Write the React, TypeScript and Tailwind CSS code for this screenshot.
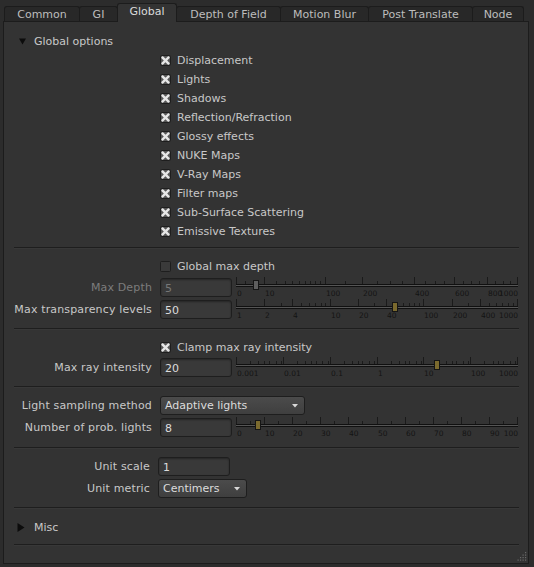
import React from "react";

const TRACK_W = 281;

type Scale = {
  pos: (v: number) => number;
  ticks: number[];
  labels: { v: number; text: string }[];
  value: number;
  disabled?: boolean;
};

const range = (from: number, to: number, step: number) => {
  const out: number[] = [];
  for (let v = from; v <= to + 1e-9; v += step) out.push(+v.toFixed(6));
  return out;
};

const logTicks = (minExp: number, maxExp: number) => {
  const out: number[] = [];
  for (let e = minExp; e < maxExp; e++) {
    for (let d = 1; d <= 9; d++) out.push(d * Math.pow(10, e));
  }
  out.push(Math.pow(10, maxExp));
  return out;
};

const depthScale: Scale = {
  pos: (v) => Math.sqrt(v / 1000),
  ticks: [0, 1, 2, 5, ...range(10, 100, 10), ...range(150, 1000, 50)],
  labels: [0, 10, 100, 200, 400, 600, 800, 1000].map((v) => ({ v, text: String(v) })),
  value: 5,
  disabled: true,
};

const transpScale: Scale = {
  pos: (v) => Math.log10(v) / 3,
  ticks: logTicks(0, 3),
  labels: [1, 2, 4, 10, 20, 40, 100, 200, 400, 1000].map((v) => ({ v, text: String(v) })),
  value: 50,
};

const rayScale: Scale = {
  pos: (v) => (Math.log10(v) + 3) / 6,
  ticks: logTicks(-3, 3),
  labels: [
    { v: 0.001, text: "0.001" },
    { v: 0.01, text: "0.01" },
    { v: 0.1, text: "0.1" },
    { v: 1, text: "1" },
    { v: 10, text: "10" },
    { v: 100, text: "100" },
    { v: 1000, text: "1000" },
  ],
  value: 20,
};

const lightsScale: Scale = {
  pos: (v) => v / 100,
  ticks: range(0, 100, 5),
  labels: range(0, 100, 10).map((v) => ({ v, text: String(v) })),
  value: 8,
};

function Slider({ scale }: { scale: Scale }) {
  const x = (v: number) => 1 + scale.pos(v) * TRACK_W;
  const labelVals = new Set(scale.labels.map((l) => l.v));
  let last = -100;
  const ticks = scale.ticks.filter((v) => {
    const px = x(v);
    if (labelVals.has(v) || px - last >= 4) {
      last = px;
      return true;
    }
    return false;
  });
  const hx = x(scale.value);
  return (
    <svg width="284" height="21" viewBox="0 0 284 21" className="block -mt-[2px] ml-[3px] shrink-0">
      {ticks.map((v, i) => {
        const tall = labelVals.has(v);
        const px = Math.min(Math.round(x(v)), 282);
        return (
          <rect
            key={i}
            x={px}
            y={tall ? 1 : 5}
            width="1"
            height={tall ? 7 : 3}
            fill="#1a1a1a"
          />
        );
      })}
      <rect x="1" y="8" width="282" height="1" fill="#101010" />
      <rect x="1" y="9" width="282" height="1" fill="#555555" />
      <rect x="1" y="10" width="282" height="1" fill="#101010" />
      <rect
        x={Math.round(hx) - 2.5}
        y="4.5"
        width="5"
        height="9"
        fill={scale.disabled ? "#5e5e5e" : "#7b6a2e"}
        stroke="#151515"
        strokeWidth="1"
      />
      {scale.labels.map((l, i) => {
        const isLast = i === scale.labels.length - 1;
        return (
          <text
            key={l.text}
            x={isLast ? 283 : Math.round(x(l.v)) + 1}
            y="19.5"
            textAnchor={isLast ? "end" : "start"}
            fontSize="7.5"
            fontFamily="'DejaVu Sans', sans-serif"
            fill="#141414"
          >
            {l.text}
          </text>
        );
      })}
    </svg>
  );
}

function Check({ checked }: { checked: boolean }) {
  return (
    <svg width="11" height="11" viewBox="0 0 11 11" className="shrink-0">
      <rect x="0.5" y="0.5" width="10" height="10" rx="1" fill={checked ? "#565656" : "#3a3a3a"} stroke="#1e1e1e" />
      {checked && (
        <path d="M2.7 2.7 L8.3 8.3 M8.3 2.7 L2.7 8.3" stroke="#e6e6e6" strokeWidth="2.4" strokeLinecap="square" />
      )}
    </svg>
  );
}

function CheckRow({ label, checked = true, className = "" }: { label: string; checked?: boolean; className?: string }) {
  return (
    <div className={`flex items-center h-[19px] pl-[156px] gap-[6px] ${className}`}>
      <Check checked={checked} />
      <span className="pt-px">{label}</span>
    </div>
  );
}

function Divider({ className = "" }: { className?: string }) {
  return <div className={`ml-[10px] w-[505px] h-[2px] border-t border-[#1e1e1e] bg-[#383838] ${className}`} />;
}

function Label({ children, disabled, w = "w-[148px]" }: { children: React.ReactNode; disabled?: boolean; w?: string }) {
  return (
    <div
      className={`${w} shrink-0 text-right leading-[20px] tracking-[0.15px] ${disabled ? "text-[#7c7c7c]" : ""}`}
    >
      {children}
    </div>
  );
}

function NumInput({ value, disabled }: { value: string; disabled?: boolean }) {
  return (
    <div
      className={`w-[72px] h-[19px] shrink-0 rounded-[3px] border border-[#1e1e1e] bg-[#393939] shadow-[inset_0_1px_2px_rgba(0,0,0,0.35)] pl-[4px] leading-[19px] ${
        disabled ? "text-[#777777]" : "text-[#dcdcdc]"
      }`}
    >
      {value}
    </div>
  );
}

function Dropdown({ value, w }: { value: string; w: string }) {
  return (
    <div
      className={`${w} h-[19px] shrink-0 rounded-[3px] border border-[#1e1e1e] bg-linear-to-b from-[#4b4b4b] to-[#3f3f3f] flex items-center justify-between pl-[4px] pr-[6px] text-[#dcdcdc]`}
    >
      <span className="pt-px">{value}</span>
      <svg width="6" height="4" viewBox="0 0 6 4">
        <path d="M0 0 H6 L3 3.5 Z" fill="#d8d8d8" />
      </svg>
    </div>
  );
}

const tabs = [
  { name: "Common", w: "w-[76px]" },
  { name: "GI", w: "w-[39px]" },
  { name: "Global", w: "w-[60px]", active: true },
  { name: "Depth of Field", w: "w-[105px]" },
  { name: "Motion Blur", w: "w-[89px]" },
  { name: "Post Translate", w: "w-[105px]" },
  { name: "Node", w: "w-[52px]" },
];

const globalOptions = [
  "Displacement",
  "Lights",
  "Shadows",
  "Reflection/Refraction",
  "Glossy effects",
  "NUKE Maps",
  "V-Ray Maps",
  "Filter maps",
  "Sub-Surface Scattering",
  "Emissive Textures",
];

export default function App() {
  return (
    <div className="w-[534px] h-[567px] bg-[#2c2c2c] text-[#c8c8c8] text-[11px] font-['DejaVu_Sans',sans-serif] overflow-hidden">
      <div className="relative z-10 flex items-end h-[22px] pl-[4px]">
        {tabs.map((t, i) => (
          <div
            key={t.name}
            className={`${t.w} ${i > 0 ? "-ml-px" : ""} flex items-center justify-center rounded-t-[3px] border border-b-0 border-[#1c1c1c] ${
              t.active
                ? "relative z-10 h-[19px] bg-[#333333] text-[#dadada] pb-[1px]"
                : "h-[15px] mb-px bg-[#282828] text-[#bdbdbd] pt-[2px]"
            }`}
          >
            {t.name}
          </div>
        ))}
      </div>
      <div className="-mt-px ml-[3px] w-[526px] h-[543px] border border-[#1c1c1c] bg-[#333333]">
        <div className="mt-[10px] flex items-center h-[19px] pl-[15px] gap-[8px]">
          <svg width="7" height="7" viewBox="0 0 7 7">
            <path d="M0 0.5 H7 L3.5 6.5 Z" fill="#0c0c0c" />
          </svg>
          <span className="pt-px">Global options</span>
        </div>
        {globalOptions.map((o) => (
          <CheckRow key={o} label={o} />
        ))}
        <Divider className="mt-[6px]" />

        <CheckRow label="Global max depth" checked={false} className="mt-[8px]" />
        <div className="mt-[2px] flex items-start h-[19px]">
          <Label disabled>Max Depth</Label>
          <div className="ml-[8px]">
            <NumInput value="5" disabled />
          </div>
          <Slider scale={depthScale} />
        </div>
        <div className="mt-[3px] flex items-start h-[19px]">
          <Label>Max transparency levels</Label>
          <div className="ml-[8px]">
            <NumInput value="50" />
          </div>
          <Slider scale={transpScale} />
        </div>
        <Divider className="mt-[9px]" />

        <CheckRow label="Clamp max ray intensity" className="mt-[8px]" />
        <div className="mt-[1px] flex items-start h-[19px]">
          <Label>Max ray intensity</Label>
          <div className="ml-[8px]">
            <NumInput value="20" />
          </div>
          <Slider scale={rayScale} />
        </div>
        <Divider className="mt-[9px]" />

        <div className="mt-[8px] flex items-start h-[19px]">
          <Label>Light sampling method</Label>
          <div className="ml-[8px]">
            <Dropdown value="Adaptive lights" w="w-[145px]" />
          </div>
        </div>
        <div className="mt-[3px] flex items-start h-[19px]">
          <Label>Number of prob. lights</Label>
          <div className="ml-[8px]">
            <NumInput value="8" />
          </div>
          <Slider scale={lightsScale} />
        </div>
        <Divider className="mt-[10px]" />

        <div className="mt-[8px] flex items-start h-[19px]">
          <Label w="w-[146px]">Unit scale</Label>
          <div className="ml-[8px]">
            <NumInput value="1" />
          </div>
        </div>
        <div className="mt-[3px] flex items-start h-[19px]">
          <Label w="w-[146px]">Unit metric</Label>
          <div className="ml-[8px]">
            <Dropdown value="Centimers" w="w-[89px]" />
          </div>
        </div>
        <Divider className="mt-[9px]" />

        <div className="mt-[9px] flex items-center h-[19px] pl-[13px] gap-[9px]">
          <svg width="8" height="9" viewBox="0 0 8 9">
            <path d="M0.5 0 V9 L7.5 4.5 Z" fill="#0c0c0c" />
          </svg>
          <span className="pt-px">Misc</span>
        </div>
        <Divider className="mt-[7px]" />

        <div className="flex justify-end pr-[1px] pt-[5px]">
          <svg width="11" height="11" viewBox="0 0 11 11">
            {[
              [9, 1], [9, 3.5], [6.5, 3.5], [9, 6], [6.5, 6], [4, 6],
              [9, 8.5], [6.5, 8.5], [4, 8.5], [1.5, 8.5],
            ].map(([cx, cy], i) => (
              <rect key={i} x={cx} y={cy} width="1.2" height="1.2" fill="#6a6a6a" />
            ))}
          </svg>
        </div>
      </div>
    </div>
  );
}
